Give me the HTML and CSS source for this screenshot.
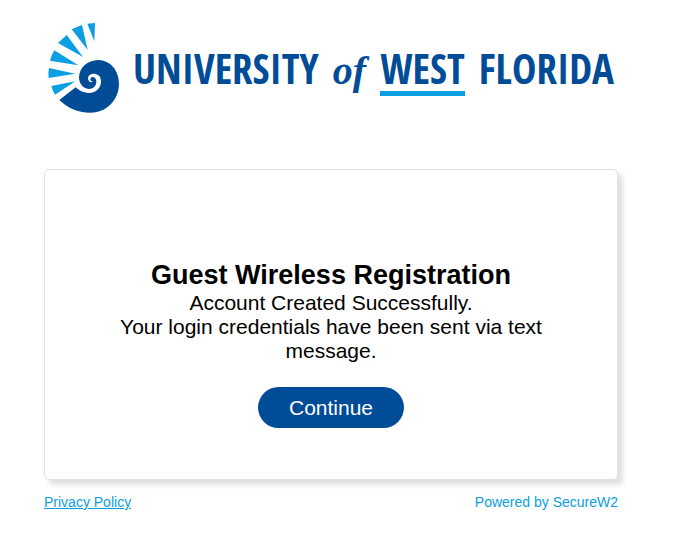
FILE: index.html
```html
<!DOCTYPE html>
<html lang="en">
<head>
  <meta charset="UTF-8">
  <meta name="viewport" content="width=device-width, initial-scale=1.0">
  <title>Guest Wireless Registration</title>
  <link rel="stylesheet" href="styles.css">
</head>
<body>
  <div class="page">
    <header class="logo">
      <svg class="logo-shell" viewBox="24 24 213 270" aria-hidden="true">
        <g fill="#0a9ee2">
          <path d="M142 26 L165 24 L163 79 Z"/>
          <path d="M95 43 L126 30 L143 105 Z"/>
          <path d="M54 84 L80 60 L129 126 Z"/>
          <path d="M30 137 Q34 121 43 106 L115 151 Z"/>
          <path d="M26 189 Q24 174 27 159 L106 176 Z"/>
          <path d="M45 239 Q37 226 34 213 L106 199 Z"/>
        </g>
        <path fill="#004c97" d="M58 255 L107 217 Q122 232 144 234 C170 235 184 216 183 198 C182 180 168 175 156 177 C145 179 141 190 147 198 C150 203 157 202 159 199 C152 200 149 194 152 189 C157 183 168 187 169 198 C170 212 160 222 146 222 C129 221 117 205 117 187 C118 157 142 136 175 135 C211 136 237 166 237 206 C237 256 198 293 151 293 C113 293 82 279 58 255 Z"/>
      </svg>
      <div class="logo-text">
        <span>UNIVERSITY</span>
        <i>of</i>
        <span class="logo-west">WEST</span>
        <span>FLORIDA</span>
      </div>
    </header>

    <main class="card">
      <h1>Guest Wireless Registration</h1>
      <p>Account Created Successfully.</p>
      <p>Your login credentials have been sent via text message.</p>
      <button type="button" class="btn">Continue</button>
    </main>

    <footer class="footer">
      <a href="#privacy">Privacy Policy</a>
      <span>Powered by SecureW2</span>
    </footer>
  </div>
</body>
</html>
```

FILE: styles.css
```css
body {
  margin: 0;
  background: #fff;
  color: #000;
  font-family: Arial, "Liberation Sans", sans-serif;
}

.page {
  padding: 23px 71px 24px 44px;
}

/* Logo */
.logo {
  display: flex;
  align-items: center;
  gap: 14px;
  padding: 0 4px;
  color: #004c97;
}

.logo-shell {
  flex: none;
  width: 71px;
  height: 90px;
}

.logo-text {
  flex: 1;
  display: flex;
  justify-content: space-between;
  align-items: baseline;
  padding-top: 4px;
  font-family: "Open Sans Condensed", "Roboto Condensed", Lato, sans-serif;
  font-size: 41px;
  font-weight: bold;
  line-height: 46px;
}

.logo-text i {
  font-family: "Liberation Serif", serif;
  font-size: 40px;
}

.logo-west {
  border-bottom: 5px solid #0a9ee2;
}

/* Card */
.card {
  margin-top: 56px;
  padding: 89px 70px 51px;
  border: 1px solid #e1e1e1;
  border-radius: 5px;
  box-shadow: 5px 5px 5px #e1e1e1;
  text-align: center;
}

h1 {
  margin: 0;
  font-size: 27px;
  line-height: 32px;
}

p {
  margin: 0;
  font-size: 21px;
  line-height: 24px;
}

.btn {
  margin-top: 24px;
  padding: 0 31px;
  border: none;
  border-radius: 21px;
  background: #004c97;
  color: #fff;
  font-family: inherit;
  font-size: 21px;
  line-height: 41px;
  cursor: pointer;
}

.btn:hover {
  background: #003b76;
}

.footer {
  display: flex;
  justify-content: space-between;
  margin-top: 14px;
  color: #0a9ee2;
  font-size: 14px;
  line-height: 16px;
}

.footer a {
  color: inherit;
}
```
